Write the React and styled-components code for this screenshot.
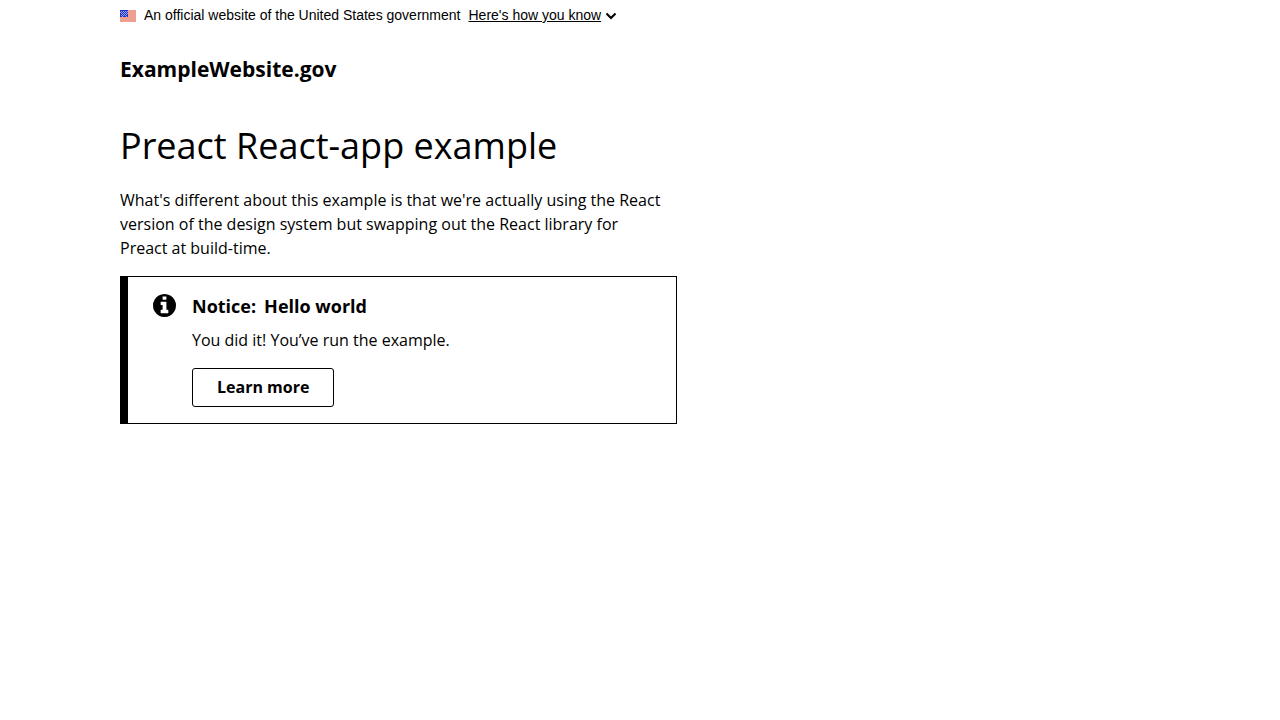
import React from "react";
import styled, { createGlobalStyle } from "styled-components";

const GlobalStyle = createGlobalStyle`
  *, *::before, *::after { box-sizing: border-box; }
  body {
    margin: 0;
    background: #fff;
    color: #000;
    font: 16px/24px "Open Sans", sans-serif;
  }
`;

const Container = styled.div`
  max-width: 1072px;
  margin: 0 auto;
  padding: 0 16px;
`;

const Banner = styled.section`
  font: 14px/18px "Liberation Sans", Arial, sans-serif;
`;

const BannerRow = styled(Container)`
  display: flex;
  align-items: center;
  gap: 8px;
  padding-top: 6px;
  padding-bottom: 7px;
`;

const Flag = styled.svg`
  flex: none;
  width: 16px;
  height: 12px;
  margin-top: 1px;
`;

const BannerText = styled.span``;

const BannerToggle = styled.button`
  display: flex;
  align-items: center;
  gap: 4px;
  padding: 0;
  border: 0;
  background: none;
  color: inherit;
  font: inherit;
  text-decoration: underline;
  cursor: pointer;
`;

const Chevron = styled.svg`
  width: 12px;
  height: 12px;
  margin-top: 2px;
`;

const SiteHeader = styled.header`
  padding: 24px 0;
`;

const SiteName = styled.div`
  font-size: 21px;
  line-height: 28px;
  font-weight: 700;
`;

const Content = styled.main`
  max-width: 557px;
  padding-top: 16px;
`;

const Title = styled.h1`
  margin: 0;
  font-size: 36px;
  line-height: 46px;
  font-weight: 400;
`;

const Lead = styled.p`
  max-width: 548px;
  margin: 19px 0 16px;
`;

const Alert = styled.section`
  display: flex;
  gap: 16px;
  padding: 16px 16px 16px 24px;
  border: 1px solid #000;
  border-left-width: 8px;
`;

const AlertIcon = styled.svg`
  flex: none;
  width: 24px;
  height: 24px;
`;

const AlertBody = styled.div`
  flex: 1;
`;

const AlertHeading = styled.h2`
  display: flex;
  gap: 8px;
  margin: 0 0 8px;
  font-size: 18px;
  line-height: 27px;
  font-weight: 700;
`;

const AlertText = styled.p`
  margin: 0 0 16px;
`;

const OutlineButton = styled.button`
  display: block;
  padding: 8px 24px;
  border: 1px solid #000;
  border-radius: 3px;
  background: #fff;
  color: #000;
  font: 700 16px/21px "Open Sans", sans-serif;
  cursor: pointer;
`;

const STARS = [
  [1, 1], [3, 1], [5, 1], [7, 1],
  [0, 2], [2, 2], [4, 2], [6, 2],
  [1, 3], [3, 3], [5, 3], [7, 3],
  [2, 4], [4, 4], [6, 4],
  [1, 5], [3, 5], [5, 5], [2, 6], [6, 6],
];

function UsaFlag() {
  return (
    <Flag viewBox="0 0 16 12" aria-hidden="true" shapeRendering="crispEdges">
      <path fill="#ef9f92" d="M0 0h16v12H0z" />
      <path fill="#1e33cc" d="M0 0h8v7H0z" />
      {STARS.map(([x, y]) => (
        <path key={`${x}-${y}`} fill="#96a2ec" d={`M${x} ${y}h1v1h-1z`} />
      ))}
    </Flag>
  );
}

function InfoIcon() {
  return (
    <AlertIcon viewBox="-67 -67 1603 1603" aria-hidden="true">
      <path d="M1024 1248v-160q0-14-9-23t-23-9h-96v-512q0-14-9-23t-23-9h-320q-14 0-23 9t-9 23v160q0 14 9 23t23 9h96v320h-96q-14 0-23 9t-9 23v160q0 14 9 23t23 9h448q14 0 23-9t9-23zM896 352v-160q0-14-9-23t-23-9h-192q-14 0-23 9t-9 23v160q0 14 9 23t23 9h192q14 0 23-9t9-23zM1536 768q0 209-103 385.500t-279.500 279.500-385.500 103-385.500-103-279.500-279.500-103-385.500 103-385.500 279.500-279.500 385.500-103 385.500 103 279.500 279.500 103 385.500z" />
    </AlertIcon>
  );
}

export default function App() {
  return (
    <>
      <GlobalStyle />
      <Banner aria-label="Official website of the United States government">
        <BannerRow>
          <UsaFlag />
          <BannerText>An official website of the United States government</BannerText>
          <BannerToggle type="button" aria-expanded="false">
            Here's how you know
            <Chevron viewBox="0 0 12 12" aria-hidden="true">
              <path d="M1.500 3.500L6 8l4.500-4.500" fill="none" stroke="#000" strokeWidth="2.100" />
            </Chevron>
          </BannerToggle>
        </BannerRow>
      </Banner>
      <Container>
        <SiteHeader>
          <SiteName>ExampleWebsite.gov</SiteName>
        </SiteHeader>
        <Content>
          <Title>Preact React-app example</Title>
          <Lead>
            What's different about this example is that we're actually using the React version of
            the design system but swapping out the React library for Preact at build-time.
          </Lead>
          <Alert aria-labelledby="notice-heading">
            <InfoIcon />
            <AlertBody>
              <AlertHeading id="notice-heading">
                <span>Notice:</span>
                <span>Hello world</span>
              </AlertHeading>
              <AlertText>You did it! You’ve run the example.</AlertText>
              <OutlineButton type="button">Learn more</OutlineButton>
            </AlertBody>
          </Alert>
        </Content>
      </Container>
    </>
  );
}
